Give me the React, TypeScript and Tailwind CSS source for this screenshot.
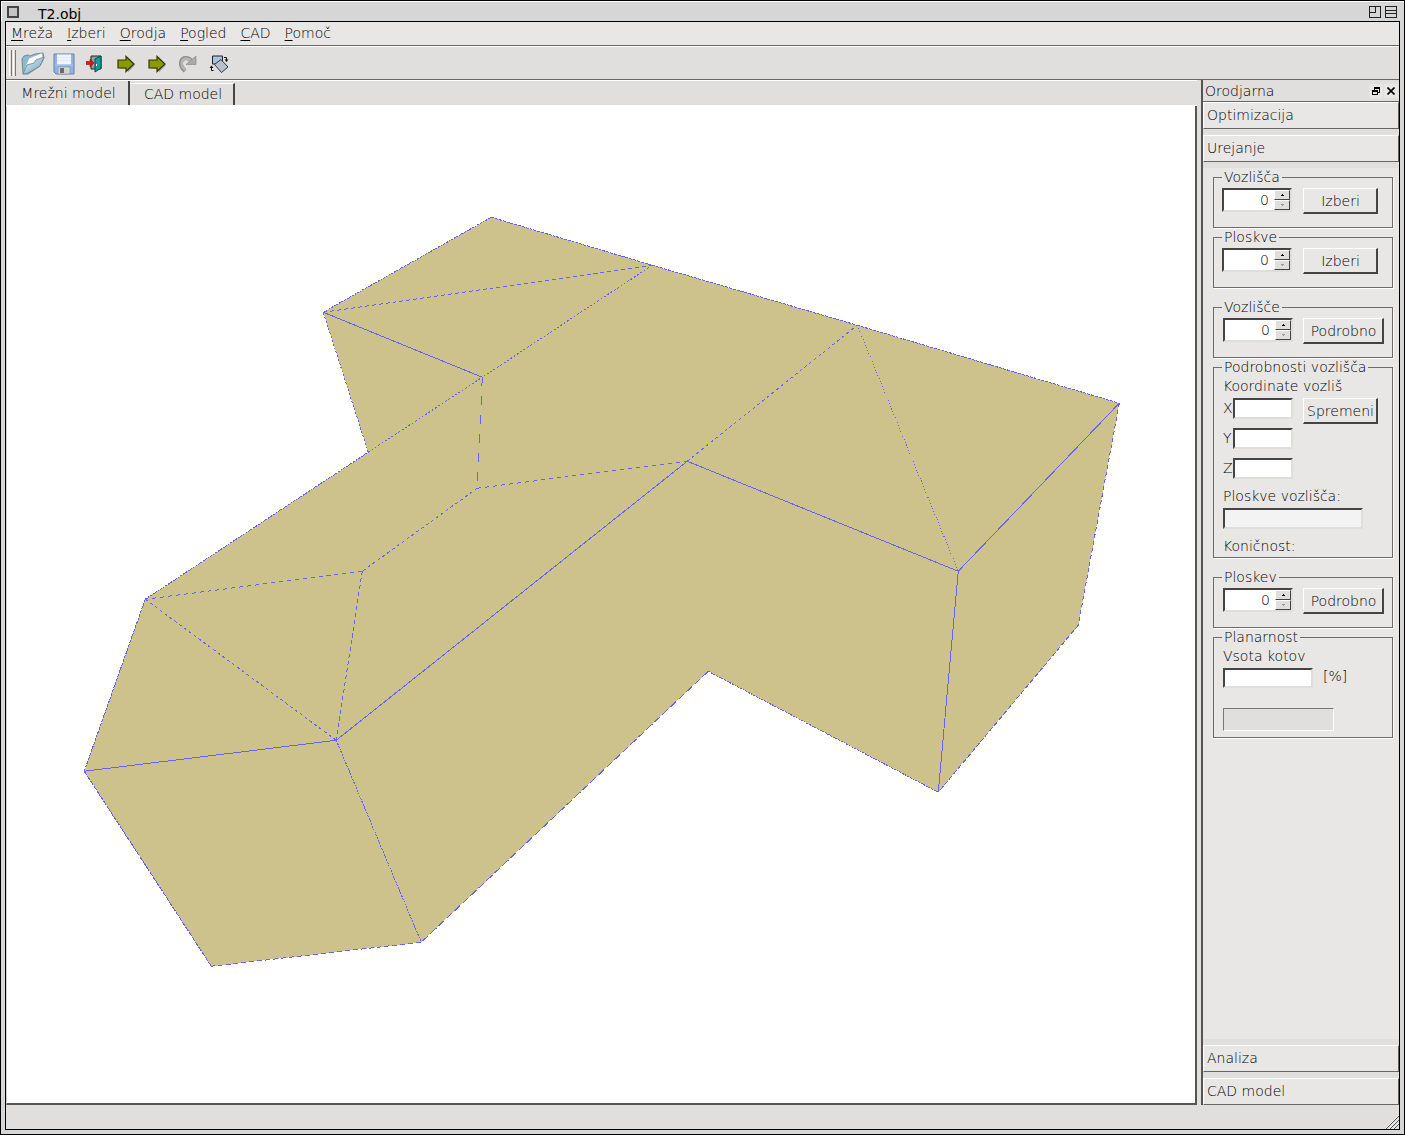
import type { ReactNode } from 'react'

const menuItems = ['Mreža', 'Izberi', 'Orodja', 'Pogled', 'CAD', 'Pomoč']

const outline = '491,217 652,265 857,325 1119,403 1078,625 938,792 708,671 421,942 211,966 84,771 145,599 368,452 323,312'

// x1, y1, x2, y2, dash pattern
const edges: [number, number, number, number, string][] = [
  [323, 312, 491, 217, '2 1'],
  [491, 217, 652, 265, '3 1'],
  [652, 265, 857, 325, '3 1'],
  [857, 325, 1119, 403, '3 1'],
  [1119, 403, 1078, 625, '4 3'],
  [1078, 625, 938, 792, '5 2'],
  [938, 792, 708, 671, '2 1'],
  [708, 671, 421, 942, '8 3'],
  [421, 942, 211, 966, '5 3'],
  [211, 966, 84, 771, '5 1'],
  [84, 771, 145, 599, '3 1'],
  [145, 599, 368, 452, '2 1'],
  [368, 452, 323, 312, '2 2'],
  [323, 312, 652, 265, '4 3'],
  [323, 312, 482, 377, ''],
  [652, 265, 482, 377, '2 2'],
  [368, 452, 482, 377, '2 2'],
  [482, 377, 477, 488, '9 10'],
  [477, 488, 687, 461, '4 4'],
  [477, 488, 362, 571, '3 3'],
  [362, 571, 145, 599, '4 4'],
  [362, 571, 336, 740, '4 3'],
  [145, 599, 336, 740, '3 3'],
  [687, 461, 857, 325, '3 3'],
  [857, 325, 958, 571, '1 2'],
  [687, 461, 958, 571, ''],
  [687, 461, 336, 740, ''],
  [958, 571, 1119, 403, ''],
  [958, 571, 938, 792, ''],
  [336, 740, 84, 771, ''],
  [336, 740, 421, 942, '2 1'],
]

const raised = 'border border-t-white border-l-white border-r-[#666] border-b-[#666]'
const sunken = 'border-2 border-t-[#444] border-l-[#444] border-r-[#dededd] border-b-[#dededd]'

function MeshView() {
  return (
    <svg viewBox="7 106 1188 997" className="block h-full w-full" role="img" aria-label="T2.obj">
      <g transform="translate(.25 .25)" shapeRendering="crispEdges">
        <polygon points={outline} fill="#cdc28c" />
        {edges.map(([x1, y1, x2, y2, dash], i) => (
          <line key={i} x1={x1} y1={y1} x2={x2} y2={y2} stroke="#6363ff" strokeDasharray={dash || undefined} />
        ))}
      </g>
    </svg>
  )
}

function OpenIcon() {
  return (
    <svg width="24" height="24" viewBox="0 0 24 24">
      <defs>
        <linearGradient id="folder" x1="0" y1="0" x2="1" y2="1">
          <stop offset="0" stopColor="#e2f1f8" />
          <stop offset="1" stopColor="#6fa3bf" />
        </linearGradient>
      </defs>
      <path d="M1 7l2-3 4-1 2 1 5-2 8-1 1 5-4 8-12 8H2z" fill="#8db8cd" stroke="#6f8c9b" />
      <path d="M4 15L8 6l13-5 1 5-3 5-14 8z" fill="#fafafa" stroke="#9aa" strokeWidth=".7" />
      <path d="M2 22L6 13l7-2 2-3 8-3-4 9L7 21z" fill="url(#folder)" stroke="#6f8c9b" strokeWidth=".9" />
    </svg>
  )
}

function SaveIcon() {
  return (
    <svg width="24" height="24" viewBox="0 0 24 24">
      <path d="M2 2h20v20H4l-2-2z" fill="#8fb4e6" stroke="#6a80a6" />
      <path d="M5 2.500h14v10H5z" fill="#f2f6fb" />
      <path d="M5 5.500h14M5 8.500h14" stroke="#dfe8f3" />
      <path d="M3 13h18" stroke="#a9c8f2" />
      <path d="M6 15h12v7H6z" fill="#d2d4d3" stroke="#8593a6" strokeWidth=".6" />
      <path d="M8 16h4v5H8z" fill="#666c74" />
    </svg>
  )
}

function ExitIcon() {
  return (
    <svg width="18" height="18" viewBox="0 0 18 18">
      <path d="M5 14V1h10v13z" fill="#8aa3a3" stroke="#222" />
      <path d="M9 4l6-3v12l-6 4z" fill="#159c98" stroke="#064c4b" />
      <path d="M10.500 9v2" stroke="#fff" />
      <path d="M0 6.500h4V4l4 4-4 4V9.500H0z" fill="#e5141b" stroke="#8d1115" strokeWidth=".6" />
    </svg>
  )
}

function ArrowIcon() {
  return (
    <svg width="20" height="18" viewBox="0 0 20 18">
      <path d="M3 5h8V1.500l7 7.500-7 7.500V13H3z" transform="translate(1 1)" fill="#aaa" />
      <path d="M2 5h8V1.500l8 7.500-8 7.500V13H2z" fill="#8a9a00" stroke="#303900" strokeWidth="1.200" />
    </svg>
  )
}

function RedoIcon() {
  return (
    <svg width="18" height="18" viewBox="0 0 18 18">
      <path d="M6 16C-1 10 2 3 7 3c4 0 5 2 5 5" fill="none" stroke="#8b8b8b" strokeWidth="4" />
      <path d="M6 15C0 10 3 3.500 7 3.500c4 0 5 2 5 5" fill="none" stroke="#b5b5b4" strokeWidth="2.500" />
      <path d="M7 9.500h10V1z" fill="#aaa" stroke="#8b8b8b" strokeWidth=".7" />
    </svg>
  )
}

function RotateIcon() {
  return (
    <svg width="20" height="18" viewBox="0 0 20 18">
      <path d="M3.500 1h10v8h-10z" fill="#a9c3df" stroke="#222" />
      <path d="M5.500 9.500l6.500-5 7 7.500-6.500 5.500z" fill="#b7c2cc" stroke="#30363b" />
      <path d="M15 2.500h2.500V5M4.500 15.500H2.500V12" fill="none" stroke="#111" />
      <path d="M15.500 4.500h4l-2 2.500zM.5 13h4l-2-2.500z" fill="#111" />
    </svg>
  )
}

const tools = [
  { label: 'Odpri', icon: <OpenIcon /> },
  { label: 'Shrani', icon: <SaveIcon /> },
  { label: 'Izhod', icon: <ExitIcon /> },
  { label: 'Naprej', icon: <ArrowIcon /> },
  { label: 'Naslednji', icon: <ArrowIcon /> },
  { label: 'Ponovi', icon: <RedoIcon /> },
  { label: 'Zavrti', icon: <RotateIcon /> },
]

function Group({ title, className = '', children }: { title: string; className?: string; children: ReactNode }) {
  return (
    <fieldset className={`border border-[#6b6b6b] px-2 shadow-[1px_1px_0_#fff] ${className}`}>
      <legend className="h-[18px] px-[2px] leading-[18px]">{title}</legend>
      {children}
    </fieldset>
  )
}

function Spinner({ label }: { label: string }) {
  return (
    <div className={`flex h-6 w-[70px] bg-white ${sunken}`}>
      <input aria-label={label} defaultValue="0" className="w-0 min-w-0 flex-1 bg-transparent pr-[5px] text-right leading-5 outline-none" />
      <div className="flex w-4 flex-col">
        {['up', 'down'].map((dir) => (
          <button
            key={dir}
            type="button"
            aria-label={dir === 'up' ? `${label} +` : `${label} -`}
            className="flex flex-1 items-center justify-center border border-t-white border-l-white border-r-[#444] border-b-[#444] bg-[#e0dfdd]"
          >
            <svg width="3" height="2" viewBox="0 0 3 2" shapeRendering="crispEdges">
              {dir === 'up' ? <path d="M1 0h1v1h1v1H0V1h1z" fill="#000" /> : <path d="M0 0h3v1H2v1H1V1H0z" fill="#999" />}
            </svg>
          </button>
        ))}
      </div>
    </div>
  )
}

function PushButton({ wide = false, children }: { wide?: boolean; children: ReactNode }) {
  return (
    <button
      type="button"
      className={`flex h-[26px] items-center justify-center border-t border-r-2 border-b-2 border-l border-t-white border-r-[#444] border-b-[#444] border-l-white pt-[2px] pl-[1px] whitespace-nowrap ${wide ? 'w-[81px]' : 'w-[75px]'}`}
    >
      {children}
    </button>
  )
}

function SpinGroup({ title, action, wide = false }: { title: string; action: string; wide?: boolean }) {
  return (
    <Group title={title} className="h-[60px]">
      <div className={`flex pt-[2px] ${wide ? 'gap-[10px] pl-[1px]' : 'gap-[11px]'}`}>
        <Spinner label={title} />
        <PushButton wide={wide}>{action}</PushButton>
      </div>
    </Group>
  )
}

function SectionHeader({ children }: { children: ReactNode }) {
  return (
    <button type="button" className={`block h-[27px] w-full shrink-0 bg-[#e8e7e5] px-[3px] text-left ${raised}`}>
      {children}
    </button>
  )
}

function Toolbox() {
  return (
    <aside className="flex w-[198px] shrink-0 flex-col border-l-2 border-[#555] bg-[#e0dfdd]">
      <div className="flex h-[22px] shrink-0 items-center justify-between border-b border-[#666] pr-[1px] pl-[2px]">
        <span className="pt-[1px]">Orodjarna</span>
        <span className="flex gap-[1px]">
          <button type="button" aria-label="Odpni" className="flex size-[14px] items-center justify-center bg-[#e8e7e5]">
            <svg width="8" height="8" viewBox="0 0 8 8" shapeRendering="crispEdges">
              <path d="M2 0h6v6H6v2H0V3h2zM3 2v1h3v2h1V2zM1 5v2h4V5z" fillRule="evenodd" />
            </svg>
          </button>
          <button type="button" aria-label="Zapri" className="flex size-[14px] items-center justify-center bg-[#e8e7e5]">
            <svg width="8" height="8" viewBox="0 0 8 8">
              <path d="M0.500 0.500l7 7M7.500 0.500l-7 7" stroke="#000" strokeWidth="1.600" />
            </svg>
          </button>
        </span>
      </div>
      <div className="flex min-h-0 flex-1 flex-col gap-[6px]">
        <SectionHeader>Optimizacija</SectionHeader>
        <SectionHeader>Urejanje</SectionHeader>
        <div className="flex flex-1 flex-col gap-[10px] bg-[#e8e7e5] pr-[6px] pl-[10px]">
          <div>
            <SpinGroup title="Vozlišča" action="Izberi" />
            <SpinGroup title="Ploskve" action="Izberi" />
          </div>
          <div>
            <SpinGroup title="Vozlišče" action="Podrobno" wide />
            <Group title="Podrobnosti vozlišča" className="h-[200px]">
              <div className="pl-[1px]">
                <div className="h-5 leading-5">Koordinate vozliš</div>
                <div className="flex gap-[10px] pt-[2px]">
                  <div className="flex flex-col gap-[9px]">
                    {['X', 'Y', 'Z'].map((axis) => (
                      <label key={axis} className="flex h-[21px] leading-5">
                        <span className="w-[10px]">{axis}</span>
                        <input className={`w-[60px] bg-white outline-none ${sunken}`} />
                      </label>
                    ))}
                  </div>
                  <PushButton>Spremeni</PushButton>
                </div>
                <label className="block pt-[7px]">
                  <span className="block leading-5">Ploskve vozlišča:</span>
                  <input readOnly className={`mt-[2px] block h-[21px] w-[140px] bg-[#f3f3f3] outline-none ${sunken}`} />
                </label>
                <div className="pt-[7px] leading-5">Koničnost:</div>
              </div>
            </Group>
          </div>
          <div>
            <SpinGroup title="Ploskev" action="Podrobno" wide />
            <Group title="Planarnost" className="h-[110px]">
              <div className="pl-[1px]">
                <label htmlFor="angles" className="block leading-5">Vsota kotov</label>
                <div className="flex gap-[10px] pt-[2px]">
                  <input id="angles" className={`h-5 w-[90px] bg-white outline-none ${sunken}`} />
                  <span className="leading-4">[%]</span>
                </div>
                <div className="mt-5 h-[23px] w-[111px] border border-t-[#777] border-r-white border-b-white border-l-[#777] bg-[#e0dfdd]" />
              </div>
            </Group>
          </div>
        </div>
        <SectionHeader>Analiza</SectionHeader>
        <SectionHeader>CAD model</SectionHeader>
      </div>
    </aside>
  )
}

export default function App() {
  return (
    <div className="flex h-screen flex-col border border-black bg-[#d6d6d6] font-['DejaVu_Sans',sans-serif] text-[14px] font-extralight text-black">
      <header className="flex h-5 shrink-0 items-center border-t border-l border-white pr-[7px] pl-[5px]">
        <button type="button" aria-label="Meni" className="size-3 border-2 border-[#444] bg-[#c4c4c4]" />
        <h1 className="ml-[19px] pt-1 leading-4 font-normal">T2.obj</h1>
        <div className="ml-auto flex gap-1">
          <button type="button" aria-label="Povečaj">
            <svg width="12" height="12" viewBox="0 0 12 12" shapeRendering="crispEdges" fill="#d6d6d6" stroke="#222">
              <path d="M.5.500h11v11H.5zM.5 6.500h6v-6" />
            </svg>
          </button>
          <button type="button" aria-label="Zvij">
            <svg width="12" height="12" viewBox="0 0 12 12" shapeRendering="crispEdges" fill="#d6d6d6" stroke="#222">
              <path d="M.5.500h11v11H.5zM.5 4.500h11M.5 7.500h11" />
            </svg>
          </button>
        </div>
      </header>

      <div className="mr-1 mb-1 ml-1 flex min-h-0 flex-1 flex-col border border-black bg-[#e0dfdd]">
        <nav className="flex h-6 shrink-0 items-start gap-[14px] border-b border-[#666] bg-[#e8e7e5] pl-[5px]">
          {menuItems.map((item) => (
            <button key={item} type="button" className="leading-[22px]">
              <span className="underline underline-offset-2">{item[0]}</span>
              {item.slice(1)}
            </button>
          ))}
        </nav>

        <div className="flex h-[34px] shrink-0 items-center border-t border-b border-t-white border-b-[#666] pl-[3px]">
          <div className="mr-[1px] flex gap-[1px]">
            <div className="h-[26px] w-[3px] border-r border-l border-l-white border-r-[#777]" />
            <div className="h-[26px] w-[3px] border-r border-l border-l-white border-r-[#777]" />
          </div>
          {tools.map((tool) => (
            <button key={tool.label} type="button" aria-label={tool.label} className="flex h-7 w-[31px] items-center justify-center pt-[1px]">
              {tool.icon}
            </button>
          ))}
        </div>

        <div className="flex min-h-0 flex-1">
          <main className="mr-1 flex min-w-0 flex-1 flex-col border-t border-white">
            <div role="tablist" className="flex h-[25px] shrink-0 items-end border-b border-white pl-[1px]">
              <button type="button" role="tab" aria-selected="true" className="h-6 w-[123px] border-r-2 border-[#444] pl-[2px]">
                Mrežni model
              </button>
              <button type="button" role="tab" aria-selected="false" className="h-[22px] w-[105px] border-t border-r-2 border-t-white border-r-[#444] pl-[3px]">
                CAD model
              </button>
            </div>
            <div className="min-h-0 flex-1 border-r-2 border-b-2 border-l border-r-[#555] border-b-[#555] border-l-[#ccc] bg-white">
              <MeshView />
            </div>
          </main>
          <Toolbox />
        </div>

        <footer className="flex h-6 shrink-0 items-end justify-end">
          <svg width="14" height="14" viewBox="0 0 14 14" stroke="#555">
            <path d="M1 14L14 1M5 14l9-9M9 14l5-5" />
            <path d="M0 14L14 0M4 14L14 4M8 14l6-6" stroke="#fff" strokeWidth=".5" />
          </svg>
        </footer>
      </div>
    </div>
  )
}
